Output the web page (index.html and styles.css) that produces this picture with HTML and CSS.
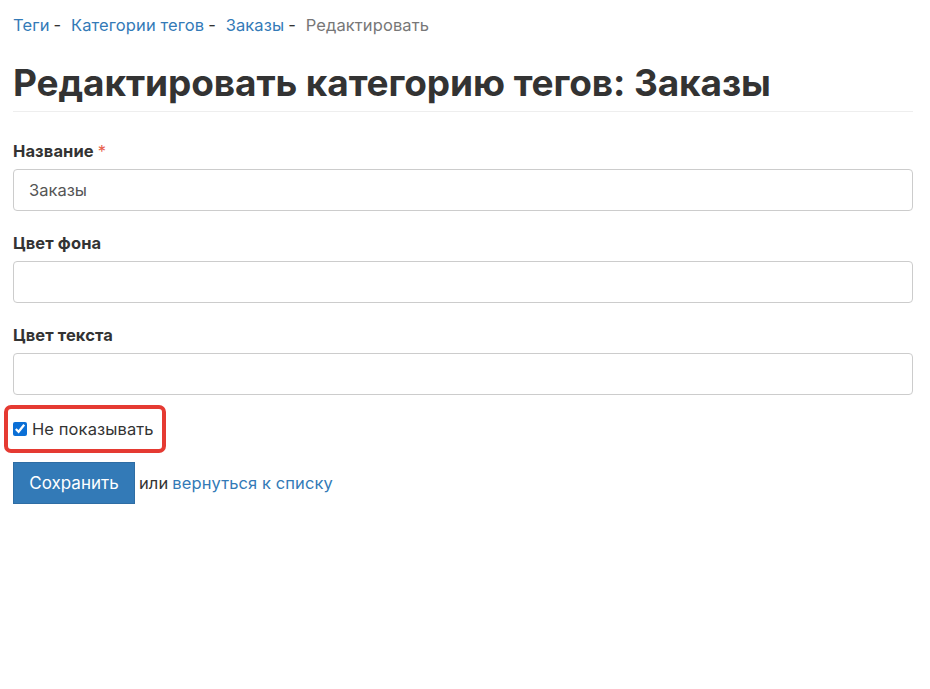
FILE: index.html
```html
<!DOCTYPE html>
<html lang="ru">
<head>
<meta charset="utf-8">
<title>Редактировать категорию тегов</title>
<link rel="stylesheet" href="styles.css">
</head>
<body>
<div class="page">
  <nav class="crumbs">
    <a href="#">Теги</a><span class="sep">-</span>
    <a href="#">Категории тегов</a><span class="sep">-</span>
    <a href="#">Заказы</a><span class="sep">-</span>
    <span class="current">Редактировать</span>
  </nav>
  <h1 class="title">Редактировать категорию тегов: Заказы</h1>
  <form class="form">
    <div class="group">
      <label class="label">Название <span class="req">*</span></label>
      <input class="input" type="text" value="Заказы">
    </div>
    <div class="group">
      <label class="label">Цвет фона</label>
      <input class="input" type="text">
    </div>
    <div class="group">
      <label class="label">Цвет текста</label>
      <input class="input" type="text">
    </div>
    <div class="check-row">
      <label class="check"><input type="checkbox" checked class="cb"><span>Не показывать</span></label>
    </div>
    <div class="actions">
      <button type="button" class="btn">Сохранить</button>
      <span class="or">или</span>
      <a href="#" class="back">вернуться к списку</a>
    </div>
  </form>
</div>
</body>
</html>
```
FILE: styles.css
```css
html, body {
  margin: 0;
  padding: 0;
  background: #fff;
}
body {
  font-family: Inter, "Noto Sans", sans-serif;
  color: #333;
  font-size: 16.5px;
  letter-spacing: 0.1px;
}
.page {
  width: 900px;
  padding: 0 13px;
}
a {
  color: #337ab7;
  text-decoration: none;
}
.crumbs {
  padding-top: 15px;
  line-height: 20px;
}
.crumbs .sep {
  color: #333;
  margin: 0 5px 0 4px;
}
.crumbs .current {
  color: #777;
}
.title {
  margin: 26px 0 0;
  font-size: 37px;
  line-height: 44px;
  font-weight: 700;
  padding-bottom: 6px;
  border-bottom: 1px solid #eee;
  letter-spacing: -0.1px;
}
.form {
  margin-top: 29px;
}
.group {
  display: flex;
  flex-direction: column;
  gap: 8px;
  margin-bottom: 22px;
}
.label {
  font-weight: 700;
  line-height: 20px;
}
.req {
  color: #e8604c;
  font-weight: 400;
}
.input {
  box-sizing: border-box;
  height: 42px;
  width: 100%;
  border: 1px solid #ccc;
  border-radius: 4px;
  padding: 0 15px;
  font-family: inherit;
  font-size: 16.5px;
  color: #555;
  margin: 0;
}
.check-row {
  margin-top: -12px;
}
.check {
  display: inline-flex;
  align-items: center;
  gap: 5px;
  border: 4px solid #e53a32;
  border-radius: 7px;
  padding: 11px 8px 11px 5px;
  margin-left: -9px;
  line-height: 18px;
}
.cb {
  margin: 0;
  width: 14px;
  height: 14px;
  accent-color: #0b6fd6;
}
.actions {
  margin-top: 9px;
  display: flex;
  align-items: center;
}
.btn {
  height: 42px;
  width: 122px;
  background: #337ab7;
  color: #fff;
  border: 1px solid #2e6da4;
  border-radius: 0;
  font-family: inherit;
  font-size: 17px;
  padding: 0;
}
.or {
  margin: 0 4px;
}
```
